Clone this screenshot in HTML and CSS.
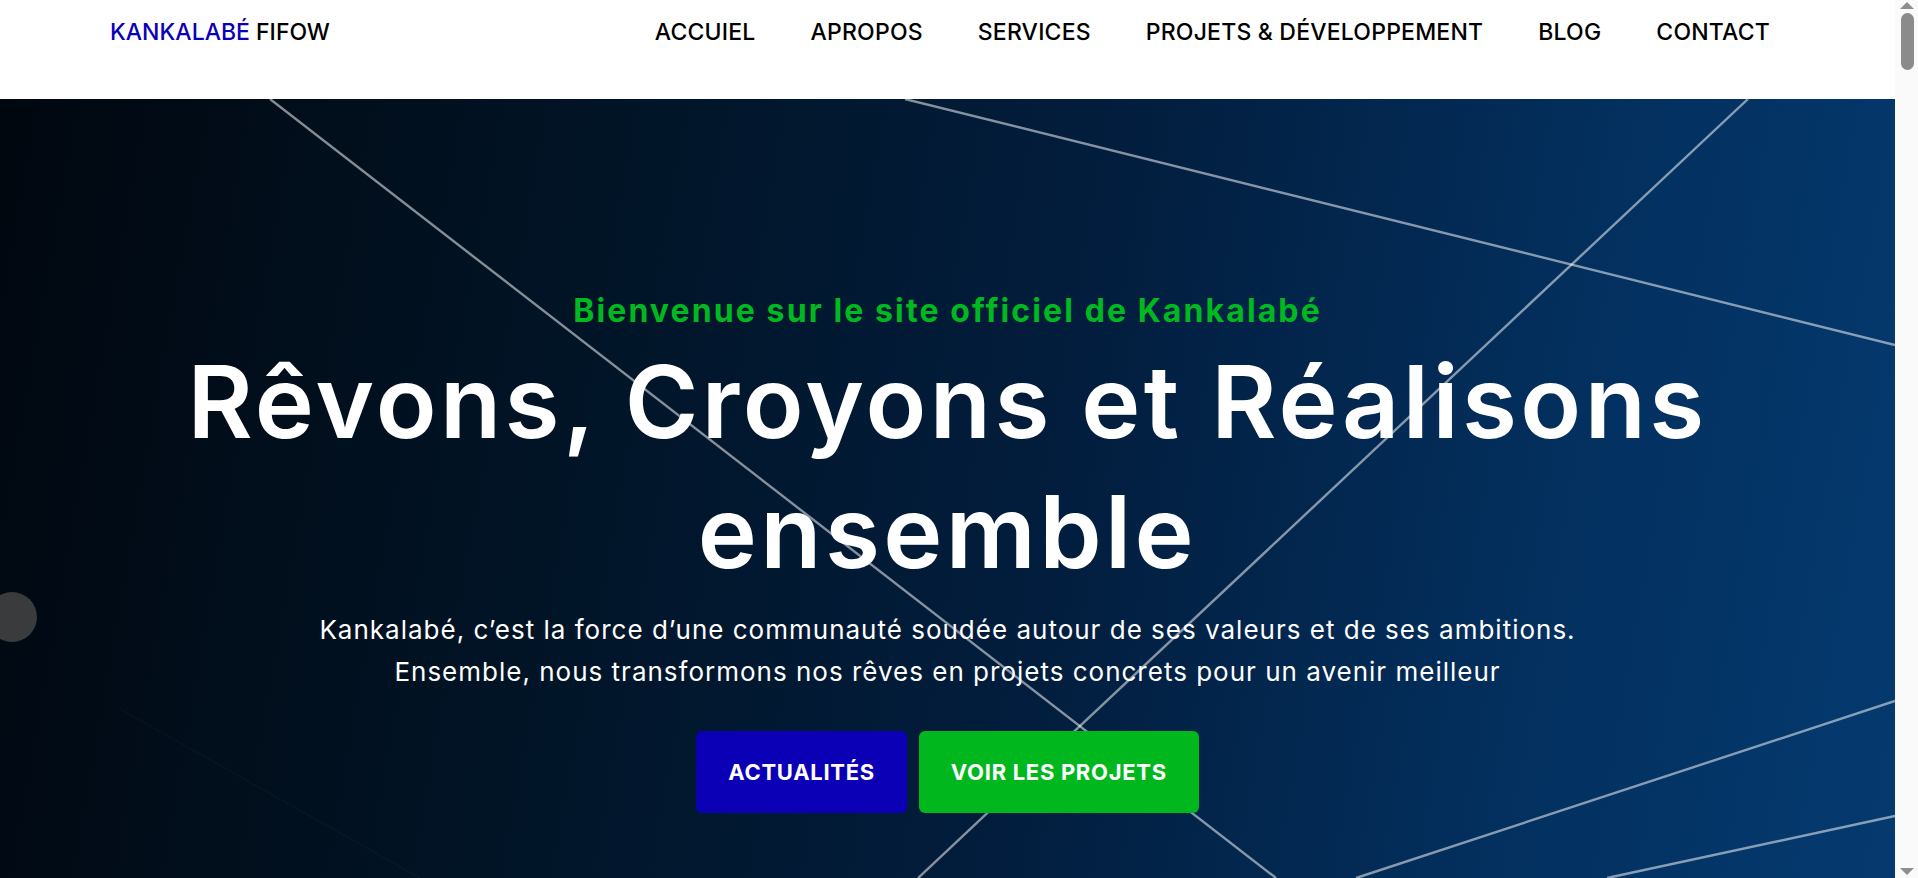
FILE: index.html
```html
<!DOCTYPE html>
<html lang="fr">
<head>
<meta charset="utf-8">
<title>Kankalabé Fifow</title>
<link rel="stylesheet" href="styles.css">
</head>
<body>
<header class="site-header">
  <a class="brand" href="#"><span class="brand-blue">KANKALABÉ</span> FIFOW</a>
  <nav class="main-nav">
    <a href="#">ACCUIEL</a>
    <a href="#">APROPOS</a>
    <a href="#">SERVICES</a>
    <a href="#">PROJETS &amp; DÉVELOPPEMENT</a>
    <a href="#">BLOG</a>
    <a href="#">CONTACT</a>
  </nav>
</header>
<section class="hero">
  <svg class="hero-net" aria-hidden="true">
    <g stroke="rgba(255,255,255,0.52)" stroke-width="2.4" fill="none">
      <line x1="270" y1="0" x2="1276" y2="779"/>
      <line x1="1748" y1="0" x2="918" y2="779"/>
      <line x1="905" y1="0" x2="1895" y2="246"/>
      <line x1="1895" y1="602" x2="1356" y2="779"/>
      <line x1="1895" y1="717" x2="1607" y2="779"/>
    </g>
    <line x1="120" y1="610" x2="420" y2="779" stroke="rgba(255,255,255,0.025)" stroke-width="2"/>
    <circle cx="12" cy="518" r="25" fill="#3a3b3d"/>
  </svg>
  <div class="hero-content">
    <p class="hero-kicker">Bienvenue sur le site officiel de Kankalabé</p>
    <h1 class="hero-title">Rêvons, Croyons et Réalisons<br>ensemble</h1>
    <p class="hero-text">Kankalabé, c’est la force d’une communauté soudée autour de ses valeurs et de ses ambitions.<br>Ensemble, nous transformons nos rêves en projets concrets pour un avenir meilleur</p>
    <div class="hero-actions">
      <a class="btn btn-blue" href="#">ACTUALITÉS</a>
      <a class="btn btn-green" href="#">VOIR LES PROJETS</a>
    </div>
  </div>
</section>
<div class="scrollbar" aria-hidden="true">
  <span class="sb-up"></span>
  <span class="sb-thumb"></span>
  <span class="sb-space"></span>
  <span class="sb-down"></span>
</div>
</body>
</html>
```
FILE: styles.css
```css
* { box-sizing: border-box; }
html, body { margin: 0; padding: 0; }
body {
  font-family: Inter, Roboto, "Liberation Sans", Arial, sans-serif;
  background: #ffffff;
  color: #000;
  padding-right: 23px;
}
a { text-decoration: none; }

/* imitation of the browser scrollbar */
.scrollbar {
  position: fixed;
  top: 0;
  right: 0;
  width: 23px;
  height: 100vh;
  background: #fafafa;
  display: flex;
  flex-direction: column;
  align-items: center;
  padding: 2px 0 3px 1px;
}
.sb-up {
  width: 0;
  height: 0;
  border-left: 7px solid transparent;
  border-right: 7px solid transparent;
  border-bottom: 7px solid #8e8e8e;
}
.sb-thumb {
  margin-top: 4px;
  width: 13px;
  height: 57px;
  border-radius: 7px;
  background: #8b8b8b;
}
.sb-space { flex: 1; }
.sb-down {
  width: 0;
  height: 0;
  border-left: 7px solid transparent;
  border-right: 7px solid transparent;
  border-top: 7px solid #8e8e8e;
}

.site-header {
  height: 99px;
  display: flex;
  align-items: flex-start;
  justify-content: space-between;
  padding: 17px 125px 0 110px;
  background: #fff;
}
.brand {
  color: #000;
  font-size: 23px;
  line-height: 30px;
  font-weight: 500;
}
.brand-blue { color: #0c00b8; }
.main-nav {
  display: flex;
  gap: 55px;
}
.main-nav a {
  color: #000;
  font-size: 23px;
  line-height: 30px;
  font-weight: 500;
  letter-spacing: 0.2px;
}

.hero {
  position: relative;
  overflow: hidden;
  min-height: 860px;
  background: linear-gradient(100deg, #01070f 0%, #011426 30%, #021d3d 55%, #03305f 80%, #053a70 100%);
  padding-top: 192px;
  padding-bottom: 60px;
}
.hero-net {
  position: absolute;
  left: 0;
  top: 0;
  width: 100%;
  height: 100%;
}
.hero-content {
  position: relative;
  display: flex;
  flex-direction: column;
  align-items: center;
  text-align: center;
}
.hero-kicker {
  margin: 0;
  color: #00b820;
  font-size: 32px;
  line-height: 40px;
  font-weight: 700;
  letter-spacing: 2.1px;
}
.hero-title {
  margin: 6px 0 0;
  color: #fff;
  font-size: 100px;
  line-height: 130px;
  font-weight: 600;
  letter-spacing: 3.4px;
}
.hero-text {
  margin: 12px 0 0;
  color: #fff;
  font-size: 26px;
  line-height: 42px;
  font-weight: 400;
  letter-spacing: 1px;
}
.hero-actions {
  margin-top: 38px;
  display: flex;
  gap: 12px;
}
.btn {
  display: block;
  height: 82px;
  padding: 0 32px;
  border-radius: 6px;
  color: #fff;
  font-size: 22px;
  line-height: 82px;
  font-weight: 700;
  letter-spacing: 0.7px;
}
.btn-blue { background: #0c00b6; }
.btn-green { background: #00b81e; }
```
